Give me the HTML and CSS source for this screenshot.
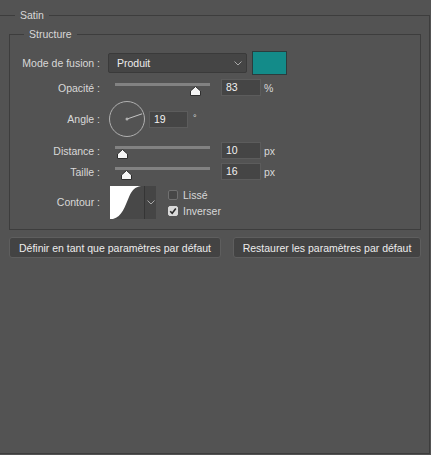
FILE: index.html
```html
<!DOCTYPE html>
<html lang="fr">
<head>
<meta charset="utf-8">
<title>Satin</title>
<link rel="stylesheet" href="styles.css">
</head>
<body>
<fieldset class="satin">
  <legend class="satin-legend">Satin</legend>
  <fieldset class="structure">
    <legend class="structure-legend">Structure</legend>

    <div class="row row-mode">
      <span class="lbl">Mode de fusion :</span>
      <div class="select">
        <span class="select-text">Produit</span>
        <svg class="chev" width="8" height="5" viewBox="0 0 8 5"><path d="M0.5 0.5 L4 4 L7.5 0.5" fill="none" stroke="#a8a8a8" stroke-width="1"/></svg>
      </div>
      <div class="swatch"></div>
    </div>

    <div class="row row-opacity">
      <span class="lbl">Opacité :</span>
      <div class="slider">
        <div class="track"></div>
        <svg class="thumb" style="left:75px" width="11" height="10" viewBox="0 0 11 10"><path d="M5.5 0.5 L10.5 5 L10.5 9.5 L0.5 9.5 L0.5 5 Z" fill="#f4f4f4" stroke="#2e2e2e" stroke-linejoin="round"/></svg>
      </div>
      <div class="num">83</div>
      <span class="unit">%</span>
    </div>

    <div class="row row-angle">
      <span class="lbl">Angle :</span>
      <svg class="dial" width="36" height="36" viewBox="0 0 36 36">
        <circle cx="18" cy="18" r="17.5" fill="none" stroke="#b0b0b0" stroke-width="1"/>
        <line x1="18" y1="18" x2="33.1" y2="12.8" stroke="#c4c4c4" stroke-width="1"/>
        <circle cx="18" cy="18" r="1.5" fill="#b0b0b0"/>
      </svg>
      <div class="num num-angle">19</div>
      <span class="unit deg">°</span>
    </div>

    <div class="row row-distance">
      <span class="lbl">Distance :</span>
      <div class="slider">
        <div class="track"></div>
        <svg class="thumb" style="left:2px" width="11" height="10" viewBox="0 0 11 10"><path d="M5.5 0.5 L10.5 5 L10.5 9.5 L0.5 9.5 L0.5 5 Z" fill="#f4f4f4" stroke="#2e2e2e" stroke-linejoin="round"/></svg>
      </div>
      <div class="num">10</div>
      <span class="unit">px</span>
    </div>

    <div class="row row-size">
      <span class="lbl">Taille :</span>
      <div class="slider">
        <div class="track"></div>
        <svg class="thumb" style="left:6px" width="11" height="10" viewBox="0 0 11 10"><path d="M5.5 0.5 L10.5 5 L10.5 9.5 L0.5 9.5 L0.5 5 Z" fill="#f4f4f4" stroke="#2e2e2e" stroke-linejoin="round"/></svg>
      </div>
      <div class="num">16</div>
      <span class="unit">px</span>
    </div>

    <div class="row row-contour">
      <span class="lbl">Contour :</span>
      <div class="contour">
        <svg class="curve" width="34" height="33" viewBox="0 0 34 33">
          <rect x="0" y="0" width="34" height="33" fill="#ffffff"/>
          <path d="M3 33 C12 31 15 20 19 11 C22 4 25 1 31 0 L34 0 L34 33 Z" fill="#484848"/>
        </svg>
        <div class="contour-drop">
          <svg width="8" height="5" viewBox="0 0 8 5"><path d="M0.5 0.5 L4 4 L7.5 0.5" fill="none" stroke="#a8a8a8" stroke-width="1"/></svg>
        </div>
      </div>
      <div class="checks">
        <div class="check"><span class="box"></span><span>Lissé</span></div>
        <div class="check"><span class="box on"><svg width="8" height="8" viewBox="0 0 8 8"><path d="M1.2 4.2 L3.2 6.2 L6.8 1.6" fill="none" stroke="#2a2a2a" stroke-width="1.6"/></svg></span><span>Inverser</span></div>
      </div>
    </div>
  </fieldset>

  <div class="buttons">
    <button class="btn btn-left">Définir en tant que paramètres par défaut</button>
    <button class="btn btn-right">Restaurer les paramètres par défaut</button>
  </div>
</fieldset>
</body>
</html>
```

FILE: styles.css
```css
html, body {
  margin: 0;
  padding: 0;
}

body {
  width: 431px;
  height: 455px;
  overflow: hidden;
  background: #535353;
  font-family: "Liberation Sans", Arial, sans-serif;
  font-size: 10.5px;
  color: #d8d8d8;
}

.satin {
  margin: 8px 1px 0 0;
  padding: 5px 8px 0 9px;
  border: 1px solid #3d3d3d;
  border-left: none;
  height: 446px;
  box-sizing: border-box;
  min-width: 0;
}

.satin-legend {
  margin-left: 6px;
  padding: 0 5px;
  line-height: 14px;
}

.structure {
  margin: 0;
  padding: 10px 0 10px 0;
  border: 1px solid #3d3d3d;
  min-width: 0;
}

.structure-legend {
  margin-left: 14px;
  padding: 0 5px;
  line-height: 14px;
}

.row {
  display: flex;
  align-items: center;
}

.lbl {
  flex: none;
  width: 90px;
  margin-right: 8px;
  text-align: right;
  white-space: nowrap;
}

.row-mode {
  height: 24px;
}

.row-opacity {
  height: 17px;
  margin-top: 4px;
}

.row-angle {
  height: 36px;
  margin-top: 5px;
}

.row-distance {
  height: 17px;
  margin-top: 5px;
}

.row-size {
  height: 17px;
  margin-top: 4px;
}

.row-contour {
  height: 33px;
  margin-top: 6px;
  align-items: flex-start;
}

.row-contour .lbl {
  line-height: 33px;
}

.select {
  box-sizing: border-box;
  width: 139px;
  height: 20px;
  background: #454545;
  border: 1px solid #3a3a3a;
  border-radius: 2px;
  display: flex;
  align-items: center;
  justify-content: space-between;
  padding: 0 4px 0 8px;
  color: #ececec;
}

.chev {
  display: block;
}

.swatch {
  box-sizing: border-box;
  width: 35px;
  height: 24px;
  margin-left: 5px;
  background: #138b89;
  border: 1px solid #2b3c3d;
}

.slider {
  position: relative;
  width: 95px;
  height: 17px;
  margin-left: 7px;
  flex: none;
}

.track {
  margin-top: 4px;
  height: 3px;
  background: #828282;
}

.thumb {
  position: absolute;
  top: 7px;
  display: block;
}

.num {
  box-sizing: border-box;
  width: 40px;
  height: 17px;
  margin-left: 11px;
  padding-left: 4px;
  line-height: 15px;
  background: #454545;
  border: 1px solid #5c5c5c;
  color: #f2f2f2;
}

.unit {
  margin-left: 3px;
  color: #d8d8d8;
}

.dial {
  display: block;
  margin-left: 1px;
  flex: none;
}

.num-angle {
  margin-left: 4px;
  width: 39px;
}

.deg {
  margin-left: 5px;
  align-self: flex-start;
  margin-top: 12px;
  font-size: 9px;
}

.contour {
  display: flex;
  margin-left: 2px;
  height: 33px;
}

.curve {
  display: block;
}

.contour-drop {
  box-sizing: border-box;
  width: 12px;
  height: 33px;
  background: #454545;
  border-left: 1px solid #353535;
  display: flex;
  align-items: center;
  justify-content: center;
}

.checks {
  margin-left: 12px;
  padding-top: 4px;
  display: flex;
  flex-direction: column;
  gap: 6px;
}

.check {
  display: flex;
  align-items: center;
  height: 10px;
  gap: 5px;
}

.box {
  box-sizing: border-box;
  width: 10px;
  height: 10px;
  border: 1px solid #707070;
  border-radius: 2px;
  background: #474747;
  display: flex;
  align-items: center;
  justify-content: center;
}

.box.on {
  background: #d9d9d9;
  border-color: #d9d9d9;
}

.buttons {
  display: flex;
  justify-content: space-between;
  margin-top: 7px;
}

.btn {
  box-sizing: border-box;
  height: 21px;
  padding: 0;
  font-family: inherit;
  font-size: 10.5px;
  color: #ececec;
  background: #434343;
  border: 1px solid #5e5e5e;
  border-radius: 3px;
}

.btn-left {
  width: 212px;
}

.btn-right {
  width: 188px;
}
```
